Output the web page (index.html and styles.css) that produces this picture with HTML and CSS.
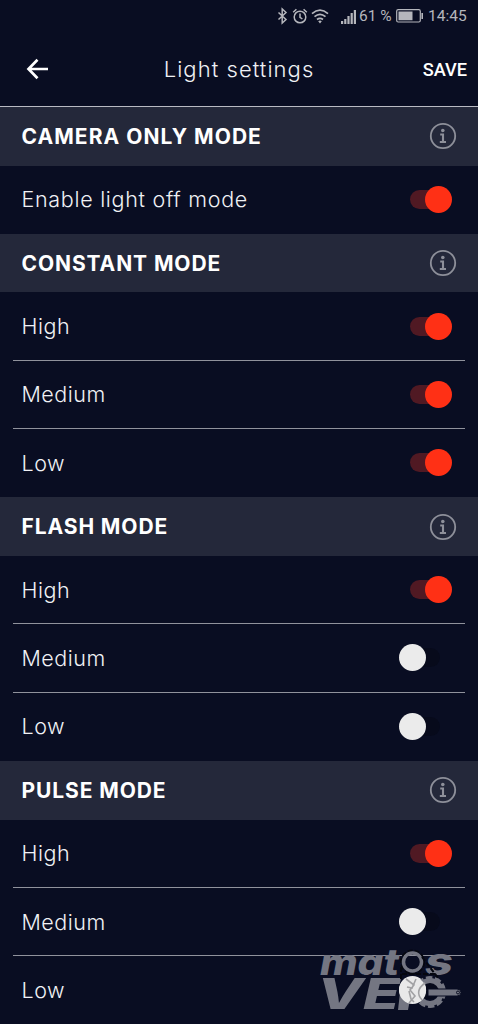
FILE: index.html
```html
<!DOCTYPE html>
<html lang="en">
<head>
<meta charset="utf-8">
<title>Light settings</title>
<link rel="stylesheet" href="styles.css">
</head>
<body>
<svg class="defs" aria-hidden="true">
  <symbol id="info" viewBox="0 0 28 28">
    <circle cx="14" cy="14" r="12.2" fill="none" stroke="currentColor" stroke-width="1.8"/>
    <circle cx="13.8" cy="8.500" r="1.8" fill="currentColor"/>
    <path d="M11.2 12.500H14V19.800M10.800 20H17" fill="none" stroke="currentColor" stroke-width="2.100"/>
  </symbol>
</svg>
<div class="screen">
  <div class="status">
    <svg class="status-icons" viewBox="0 0 92 20" width="92" height="20">
      <g fill="none" stroke="currentColor" stroke-width="1.500">
        <path d="M2.500 6.500L10 13.500L6.200 17V3L10 6.500L2.500 13.500"/>
        <circle cx="24" cy="11" r="5.800"/>
        <path d="M24 7.600V11.300L26.400 13M17.200 6.200L20.400 3.200M30.800 6.200L27.600 3.200"/>
        <path d="M36 7.600Q44 .8 52 7.600M38.500 10.600Q44 6 49.500 10.600M41 13.500Q44 11.200 47 13.500" stroke-width="1.700"/>
      </g>
      <path fill="currentColor" d="M42.200 15.200L44 17.500L45.800 15.200Q44 14 42.200 15.200ZM65 15h2.200v3h-2.200zM68.200 13h2.200v5h-2.200zM71.400 10h2.200v8h-2.200zM74.600 7h2.200v11h-2.200zM77.800 4h2.200v14h-2.200z"/>
    </svg>
    <span class="percent">61 %</span>
    <svg class="battery" viewBox="0 0 28 14" width="28" height="14">
      <rect x=".7" y=".7" width="23.600" height="12.300" rx="1.500" fill="none" stroke="currentColor" stroke-width="1.200"/>
      <path fill="currentColor" d="M2.500 2.500H16.500V11.300H2.500ZM25.400 4H27V10H25.400Z"/>
    </svg>
    <span class="clock">14:45</span>
  </div>
  <header class="bar">
    <svg class="back" viewBox="0 0 24 22" width="24" height="22"><path d="M22 11H3M11.500 1.800L2.500 11L11.500 20.200" fill="none" stroke="currentColor" stroke-width="2.700"/></svg>
    <h1 class="title">Light settings</h1>
    <span class="save">SAVE</span>
  </header>
  <section class="group">
    <h2 class="head"><span class="wide">CAMERA ONLY MODE</span><svg class="info"><use href="#info"/></svg></h2>
    <div class="row"><span class="long">Enable light off mode</span><i class="switch on"></i></div>
  </section>
  <section class="group">
    <h2 class="head"><span>CONSTANT MODE</span><svg class="info"><use href="#info"/></svg></h2>
    <div class="row"><span>High</span><i class="switch on"></i></div>
    <div class="row"><span>Medium</span><i class="switch on"></i></div>
    <div class="row"><span>Low</span><i class="switch on"></i></div>
  </section>
  <section class="group">
    <h2 class="head"><span>FLASH MODE</span><svg class="info"><use href="#info"/></svg></h2>
    <div class="row"><span>High</span><i class="switch on"></i></div>
    <div class="row"><span>Medium</span><i class="switch"></i></div>
    <div class="row"><span>Low</span><i class="switch"></i></div>
  </section>
  <section class="group">
    <h2 class="head"><span>PULSE MODE</span><svg class="info"><use href="#info"/></svg></h2>
    <div class="row"><span>High</span><i class="switch on"></i></div>
    <div class="row"><span>Medium</span><i class="switch"></i></div>
    <div class="row"><span>Low</span><i class="switch"></i></div>
  </section>
  <svg class="watermark" viewBox="316 924 160 100" width="160" height="100">
    <g class="mark brand">
      <text x="320" y="975" font-size="36" textLength="79" lengthAdjust="spacingAndGlyphs">mat</text>
      <text x="425" y="975" font-size="38" textLength="28" lengthAdjust="spacingAndGlyphs">s</text>
      <text x="317" y="1009" font-size="43" textLength="83" lengthAdjust="spacingAndGlyphs">VE</text>
    </g>
    <!-- chain wheel, crank and chain -->
    <path class="mark" d="M401 984H413L408 1010H398Z"/>
    <circle cx="430" cy="992" r="11.500" class="ring"/>
    <circle cx="430" cy="992" r="14.500" class="teeth"/>
    <path class="crank" d="M428 989H457Q461 989 461 992.500T457 996H428Z"/>
    <circle cx="458" cy="992.500" r="1.500" class="hole"/>
    <circle cx="412.500" cy="962" r="11.500" class="chain"/>
    <circle cx="412.500" cy="962" r="9" class="ring small"/>
    <path class="chain" d="M401 967V981M402 974H436M422 957L439 979"/>
    <circle cx="412.600" cy="990.500" r="13.500" class="knob"/>
    <path class="scratch" d="M406 979L414 985L410 990L415 996L409 1003M416 979L412 988L407 987M409 991L411 999L414 1002M425 983Q414 991 422 1000"/>
  </svg>
</div>
</body>
</html>
```
FILE: styles.css
```css
* { box-sizing: border-box; }
body { margin: 0; background: #090d22; }
.defs { position: absolute; width: 0; height: 0; }
.screen {
  position: relative;
  width: 478px;
  height: 1024px;
  overflow: hidden;
  background: #090d22;
  color: #f0f1f5;
  font-family: Inter, "Liberation Sans", sans-serif;
}
.status {
  display: flex;
  align-items: center;
  height: 32px;
  padding: 0 9px 0 276px;
  color: #b5b6bc;
  font: 15.500px Roboto, sans-serif;
}
.status-icons { flex: none; margin-right: -9px; }
.percent { width: 37px; white-space: nowrap; }
.battery { flex: none; }
.clock { margin-left: 4px; }
.bar {
  display: grid;
  grid-template-columns: 100px 1fr 100px;
  align-items: center;
  height: 75px;
  border-bottom: 1.500px solid #b9bac3;
}
.back { margin-left: 26px; color: #fff; }
.title {
  margin: 0;
  font-size: 22px;
  font-weight: 350;
  letter-spacing: 1.050px;
  text-align: center;
}
.save { padding-right: 11px; text-align: right; font: 500 18.200px Roboto, sans-serif; color: #fff; }
.head {
  display: flex;
  align-items: center;
  justify-content: space-between;
  height: 58.500px;
  margin: 0;
  padding: 0 21px 0 21.500px;
  background: #24283a;
  color: #fff;
  font-size: 21px;
  font-weight: 700;
  letter-spacing: .9px;
}
.head .wide { letter-spacing: 1.050px; }
.info { width: 28px; height: 28px; color: #8e909a; }
.row {
  position: relative;
  display: flex;
  align-items: center;
  justify-content: space-between;
  height: 68.370px;
  padding: 0 26px 1px 21.500px;
  font-size: 21.500px;
  font-weight: 350;
  letter-spacing: .5px;
}
.row .long { letter-spacing: .7px; }
.row + .row::before {
  content: "";
  position: absolute;
  top: -1px;
  left: 13px;
  right: 13px;
  height: 1px;
  background: #90929c;
}
.switch { position: relative; width: 53px; height: 27px; }
.switch::before {
  content: "";
  position: absolute;
  top: 4px;
  left: 11px;
  width: 30px;
  height: 19px;
  border-radius: 10px;
  background: #070a1b;
}
.switch::after {
  content: "";
  position: absolute;
  top: 0;
  left: 0;
  width: 27px;
  height: 27px;
  border-radius: 50%;
  background: #ebebeb;
}
.switch.on::before { background: #501923; }
.switch.on::after { left: 26px; background: #ff3015; }
.watermark { position: absolute; left: 316px; top: 924px; }
.mark { fill: #747682; }
.brand { font-family: Inter, sans-serif; font-weight: 800; font-style: italic; }
.ring { fill: none; stroke: #747682; stroke-width: 5; }
.ring.small { stroke-width: 3.500; }
.teeth { fill: none; stroke: #747682; stroke-width: 3; stroke-dasharray: 6.500 2.610; }
.crank { fill: #747682; stroke: #090d22; stroke-width: 1; }
.hole { fill: #747682; stroke: #090d22; stroke-width: 1; }
.chain { fill: none; stroke: #05070f; stroke-width: 2; stroke-dasharray: 5 2; }
.knob { fill: #e9e9e9; }
.scratch { fill: none; stroke: #a2a2a4; stroke-width: 1.600; }
```
